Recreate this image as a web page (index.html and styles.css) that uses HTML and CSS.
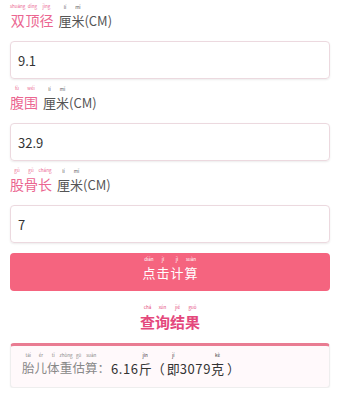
FILE: index.html
```html
<!DOCTYPE html>
<html lang="zh">
<head>
<meta charset="utf-8">
<link rel="stylesheet" href="styles.css">
</head>
<body>
<div class="page">
  <div class="field first">
    <div class="label"><span class="key"><span class="py"><i>shuāng</i><b>双</b></span><span class="py"><i>dǐng</i><b>顶</b></span><span class="py"><i>jìng</i><b>径</b></span></span><span class="unit"><span class="py"><i>lí</i><b>厘</b></span><span class="py"><i>mǐ</i><b>米</b></span><span class="plain">(CM)</span></span></div>
    <div class="input">9.1</div>
  </div>
  <div class="field">
    <div class="label"><span class="key"><span class="py"><i>fù</i><b>腹</b></span><span class="py"><i>wéi</i><b>围</b></span></span><span class="unit"><span class="py"><i>lí</i><b>厘</b></span><span class="py"><i>mǐ</i><b>米</b></span><span class="plain">(CM)</span></span></div>
    <div class="input">32.9</div>
  </div>
  <div class="field">
    <div class="label"><span class="key"><span class="py"><i>gǔ</i><b>股</b></span><span class="py"><i>gǔ</i><b>骨</b></span><span class="py"><i>cháng</i><b>长</b></span></span><span class="unit"><span class="py"><i>lí</i><b>厘</b></span><span class="py"><i>mǐ</i><b>米</b></span><span class="plain">(CM)</span></span></div>
    <div class="input">7</div>
  </div>
  <div class="button"><span class="py"><i>diǎn</i><b>点</b></span><span class="py"><i>jī</i><b>击</b></span><span class="py"><i>jì</i><b>计</b></span><span class="py"><i>suàn</i><b>算</b></span></div>
  <div class="title"><span class="py"><i>chá</i><b>查</b></span><span class="py"><i>xún</i><b>询</b></span><span class="py"><i>jié</i><b>结</b></span><span class="py"><i>guǒ</i><b>果</b></span></div>
  <div class="result">
    <span class="rlabel"><span class="py"><i>tāi</i><b>胎</b></span><span class="py"><i>ér</i><b>儿</b></span><span class="py"><i>tǐ</i><b>体</b></span><span class="py"><i>zhòng</i><b>重</b></span><span class="py"><i>gū</i><b>估</b></span><span class="py"><i>suàn</i><b>算</b></span><span class="plain">：</span></span><span class="rvalue"><span class="plain num">6.16</span><span class="py"><i>jīn</i><b>斤</b></span><span class="plain lp">（</span><span class="py"><i>jí</i><b>即</b></span><span class="plain num">3079</span><span class="py"><i>kè</i><b>克</b></span><span class="plain rp">）</span></span>
  </div>
</div>
</body>
</html>
```
FILE: styles.css
```css
html, body {
  margin: 0;
  padding: 0;
  background: #ffffff;
}
body {
  font-family: "Noto Sans CJK SC", "Noto Sans", sans-serif;
  color: #333;
}
.page {
  padding: 0 10px;
  display: flex;
  flex-direction: column;
}
.py {
  display: inline-flex;
  flex-direction: column;
  align-items: center;
}
.py i {
  font-style: normal;
  font-weight: normal;
  font-size: 4.5px;
  line-height: 5px;
  margin-bottom: 4px;
  white-space: nowrap;
}
.py b {
  font-weight: inherit;
  line-height: 1;
}
.plain {
  line-height: 1;
}
.key, .unit, .rlabel, .rvalue {
  display: inline-flex;
  align-items: flex-end;
}
.field {
  display: flex;
  flex-direction: column;
}
.label {
  height: 44px;
  display: flex;
  align-items: center;
  gap: 5px;
  padding-bottom: 7px;
  box-sizing: border-box;
  font-size: 14px;
}
.first .label {
  height: 41px;
  padding-bottom: 10px;
}
.key {
  color: #eb6691;
  font-size: 14px;
}
.unit {
  color: #555;
  font-size: 13px;
}
.input {
  height: 38px;
  box-sizing: border-box;
  border: 1px solid #ecd9df;
  border-radius: 4px;
  box-shadow: 0 1px 2px rgba(0,0,0,0.08);
  padding: 0 7px;
  display: flex;
  align-items: center;
  font-size: 13px;
  color: #333;
}
.button {
  margin-top: 10px;
  height: 38px;
  box-sizing: border-box;
  padding-bottom: 9px;
  border-radius: 4px;
  background: #f5647f;
  color: #fff;
  display: flex;
  align-items: center;
  justify-content: center;
  gap: 1px;
  font-size: 13px;
}
.title {
  height: 51px;
  display: flex;
  align-items: center;
  justify-content: center;
  color: #e4487c;
  font-size: 15px;
  font-weight: bold;
}
.result {
  margin-top: 1px;
  height: 45px;
  box-sizing: border-box;
  border: 1px solid #eeeeee;
  border-top: 3px solid #e97c92;
  border-radius: 4px;
  background: #fff9fb;
  box-shadow: 0 1px 2px rgba(0,0,0,0.06);
  display: flex;
  align-items: center;
  padding: 0 11px 5px;
  font-size: 12.5px;
}
.rlabel {
  color: #888;
}
.rvalue {
  color: #333;
  font-size: 13px;
  margin-left: 1px;
}
.num {
  letter-spacing: 0.6px;
}
.lp {
  margin-right: 2px;
}
.rp {
  margin-left: 3px;
}
```
